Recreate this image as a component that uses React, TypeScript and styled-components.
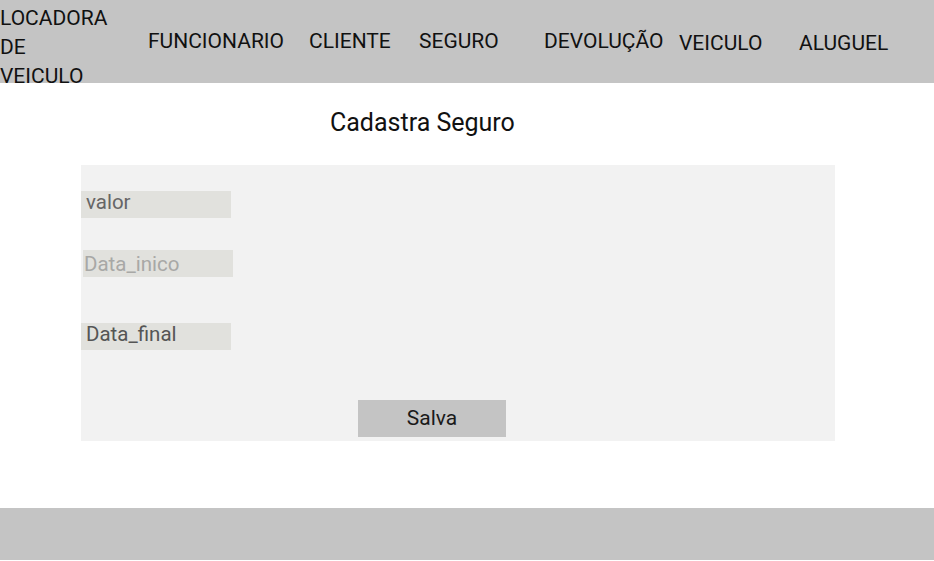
import styled, { createGlobalStyle } from "styled-components"

const GlobalStyle = createGlobalStyle`
  html, body {
    margin: 0;
    padding: 0;
    background: #ffffff;
    font-family: Roboto, "Liberation Sans", sans-serif;
  }
`

const Page = styled.div`
  display: flex;
  flex-direction: column;
  width: 934px;
  min-height: 561px;
`

const Header = styled.header`
  display: grid;
  grid-template-columns: 148px 161px 110px 125px 135px 120px 1fr;
  align-items: center;
  height: 83px;
  background: #c4c4c4;
  color: #111111;
  font-size: 21px;
`

const Logo = styled.div`
  align-self: start;
  padding-top: 4px;
  line-height: 29px;
`

const NavLink = styled.a<{ $drop?: number }>`
  margin-top: ${(p) => p.$drop ?? 0}px;
  color: inherit;
  text-decoration: none;
  white-space: nowrap;
  cursor: pointer;
`

const Main = styled.main`
  display: flex;
  flex-direction: column;
  padding: 0 0 0 81px;
`

const Title = styled.h1`
  margin: 25px 0 0 249px;
  height: 57px;
  font-size: 25px;
  font-weight: 400;
  color: #111111;
`

const Card = styled.form`
  display: flex;
  flex-direction: column;
  align-items: flex-start;
  width: 754px;
  height: 276px;
  box-sizing: border-box;
  padding-top: 26px;
  background: #f2f2f2;
`

const Field = styled.input<{ $shift?: number; $top?: number; $lift?: number; $tone?: string }>`
  box-sizing: border-box;
  width: 150px;
  height: 27px;
  margin: ${(p) => p.$top ?? 0}px 0 0 ${(p) => p.$shift ?? 0}px;
  padding: 0 0 ${(p) => p.$lift ?? 0}px ${(p) => (p.$shift ? 1 : 5)}px;
  border: none;
  outline: none;
  background: #e1e1dd;
  font-family: inherit;
  font-size: 20.5px;
  color: ${(p) => p.$tone ?? "#666666"};

  &::placeholder {
    color: #a8a8a6;
  }
`

const SaveButton = styled.button`
  width: 148px;
  height: 37px;
  margin: 50px 0 0 277px;
  padding: 0 0 2px;
  border: none;
  background: #c4c4c4;
  font-family: inherit;
  font-size: 21px;
  color: #1a1a1a;
  cursor: pointer;
`

const Footer = styled.footer`
  height: 52px;
  margin-top: 67px;
  background: #c4c4c4;
`

const navItems = [
  { label: "FUNCIONARIO", drop: -10 },
  { label: "CLIENTE", drop: -10 },
  { label: "SEGURO", drop: -10 },
  { label: "DEVOLUÇÃO", drop: -10 },
  { label: "VEICULO", drop: -5 },
  { label: "ALUGUEL", drop: -5 },
]

export default function App() {
  return (
    <>
      <GlobalStyle />
      <Page>
        <Header>
          <Logo>
            LOCADORA
            <br />
            DE
            <br />
            VEICULO
          </Logo>
          {navItems.map((item) => (
            <NavLink key={item.label} $drop={item.drop}>
              {item.label}
            </NavLink>
          ))}
        </Header>
        <Main>
          <Title>Cadastra Seguro</Title>
          <Card onSubmit={(e) => e.preventDefault()}>
            <Field $lift={6} defaultValue="valor" />
            <Field $shift={2} $top={32} placeholder="Data_inico" />
            <Field $top={46} $lift={5} $tone="#555555" defaultValue="Data_final" />
            <SaveButton type="submit">Salva</SaveButton>
          </Card>
        </Main>
        <Footer />
      </Page>
    </>
  )
}
